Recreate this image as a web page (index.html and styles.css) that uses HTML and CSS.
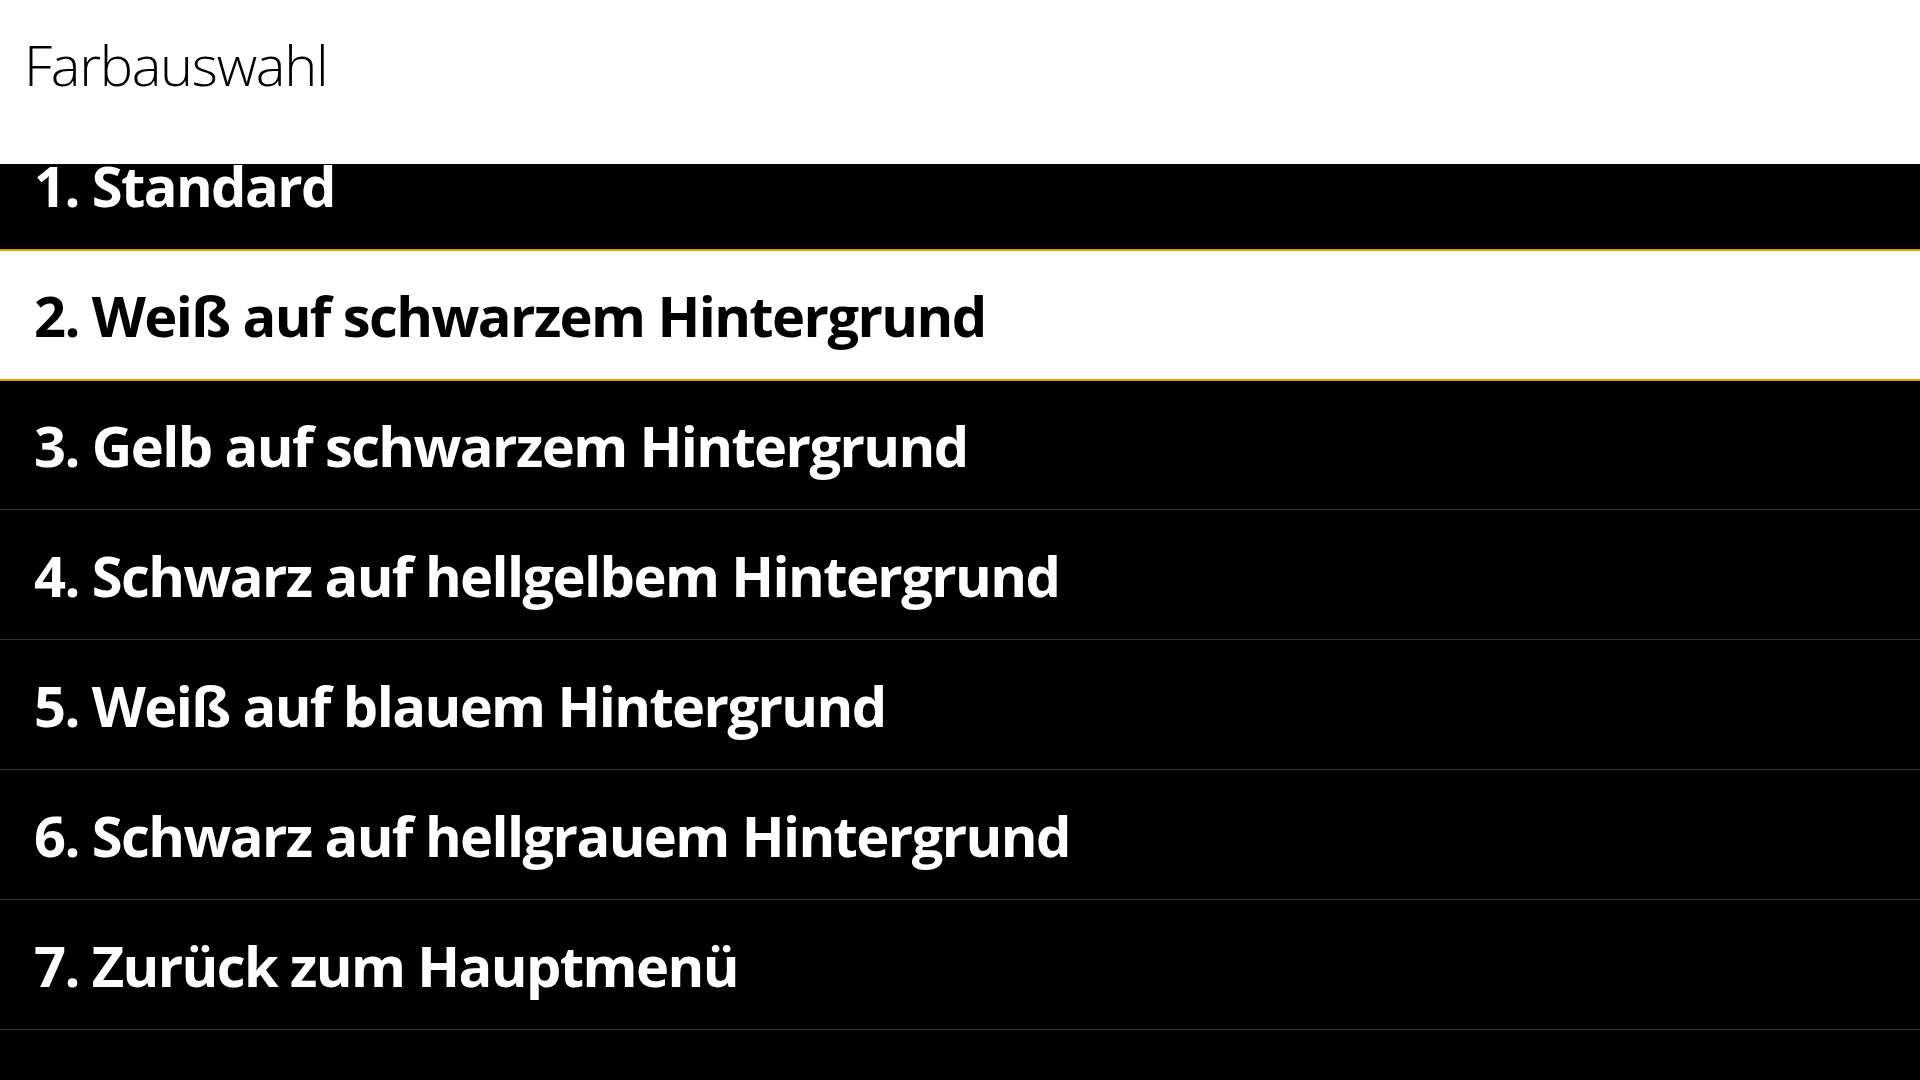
FILE: index.html
```html
<html><head>
    <title>Farbauswahl</title>
    <meta name="viewport" content="width=device-width, initial-scale=1">
    <link rel="stylesheet" href="styles.css">
    </head>
    <body>
    <div class="header">
        <h1>Farbauswahl</h1>
    </div>
    <div class="menu">
        <ul class="list">
            <li class="item">1. Standard</li>
            <li class="item active">2. Weiß auf schwarzem Hintergrund</li>
            <li class="item">3. Gelb auf schwarzem Hintergrund</li>
            <li class="item">4. Schwarz auf hellgelbem Hintergrund</li>
            <li class="item">5. Weiß auf blauem Hintergrund</li>
            <li class="item">6. Schwarz auf hellgrauem Hintergrund</li>
            <li class="item">7. Zurück zum Hauptmenü</li>
        </ul>
    </div>
    </body>
    </html>
```

FILE: styles.css
```css
html, body {
    margin: 0;
    height: 100%;
    background-color: #000000;
    font-family: "Open Sans", "Noto Sans", sans-serif;
}
body {
    display: flex;
    flex-direction: column;
    overflow: hidden;
}
.header {
    background-color: #ffffff;
    height: 164px;
    flex: none;
}
h1 {
    margin: 0;
    padding: 22px 0 0 24px;
    font-size: 56px;
    font-weight: 300;
    letter-spacing: -1.3px;
    color: #000000;
    line-height: 84px;
}
.menu {
    flex: 1;
    overflow: hidden;
}
/* list is scrolled a little, first entry sits under the header */
.list {
    list-style: none;
    margin: -44px 0 0 0;
    padding: 0;
}
.item {
    height: 129px;
    border-bottom: 1px solid #333333;
    box-sizing: content-box;
    padding-left: 34px;
    display: flex;
    align-items: center;
    font-size: 56px;
    font-weight: 700;
    letter-spacing: -1.6px;
    color: #ffffff;
}
.item.active {
    position: relative;
    height: 128px;
    margin: -1px 0;
    border-top: 2px solid #e89c00;
    border-bottom: 2px solid #e89c00;
    background-color: #ffffff;
    color: #000000;
}
```
